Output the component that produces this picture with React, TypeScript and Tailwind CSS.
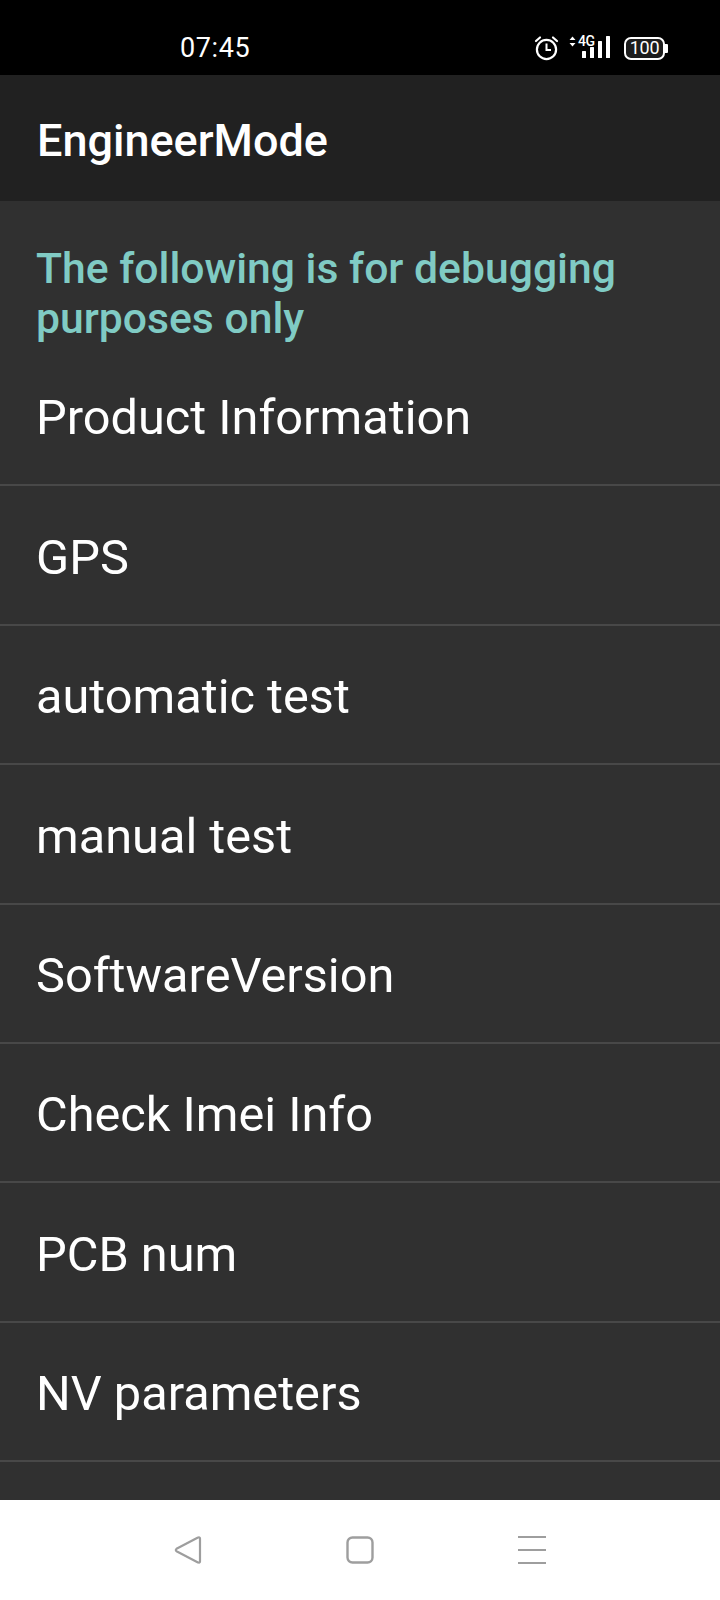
import React from 'react';

const items = [
    'Product Information',
    'GPS',
    'automatic test',
    'manual test',
    'SoftwareVersion',
    'Check Imei Info',
    'PCB num',
    'NV parameters',
];

const AlarmIcon = () => (
    <svg width="25" height="26" viewBox="0 0 25 26" fill="none" stroke="white" strokeWidth="2.2">
        <circle cx="12.5" cy="14.5" r="9.6" />
        <path d="M12.5 8.5V15H17" strokeWidth="2" />
        <path d="M2 6L6 2.5M23 6L19 2.5" strokeWidth="2.2" strokeLinecap="round" />
    </svg>
);

const SignalIcon = () => (
    <svg width="44" height="36" viewBox="0 -10 44 36" fill="white">
        <path d="M4.5 1.5L7.5 5H1.5ZM4.5 11.5L1.5 8H7.5Z" />
        <text x="10" y="11" fontSize="14" fontWeight="500" fontFamily="Roboto, sans-serif" letterSpacing="-0.5">4G</text>
        <rect x="14" y="16" width="4" height="7" rx="0.5" />
        <rect x="22" y="12" width="4" height="11" rx="0.5" />
        <rect x="30" y="6" width="4" height="17" rx="0.5" />
        <rect x="38" y="1" width="4" height="22" rx="0.5" />
    </svg>
);

const Battery = () => (
    <div className="flex items-center">
        <div className="w-[41px] h-[23px] rounded-[7px] border-2 border-white flex items-center justify-center bg-[#1c1c1c] text-white text-[18px] leading-none tracking-[-0.3px]">
            100
        </div>
        <div className="w-[3px] h-[9px] bg-white rounded-r-[1px]" />
    </div>
);

const App = () => {
    return (
        <div className="w-[720px] h-[1600px] flex flex-col overflow-hidden font-['Roboto',sans-serif] bg-[#303030]">
            {/* Status bar */}
            <div className="h-[75px] bg-black flex items-center shrink-0 text-white pt-[21px]">
                <span className="ml-[180px] text-[27px] leading-none tracking-[0.6px]">07:45</span>
                <div className="ml-auto mr-[52px] flex items-center">
                    <AlarmIcon />
                    <div className="ml-[9px] mt-[-10px]">
                        <SignalIcon />
                    </div>
                    <div className="ml-[12px]">
                        <Battery />
                    </div>
                </div>
            </div>

            {/* Action bar */}
            <div className="h-[126px] bg-[#212121] flex items-center px-[37px] shrink-0">
                <h1 className="text-white text-[45px] font-medium leading-none mt-[5px]">EngineerMode</h1>
            </div>

            <div className="flex-1 min-h-0 overflow-hidden">
                <p className="h-[146px] pl-[36px] pr-[30px] pt-[42px] text-[#80cbc4] text-[42.7px] font-medium leading-[50px]">
                    The following is for debugging purposes only
                </p>
                {items.map(item => (
                    <div key={item} className="h-[139.4px] px-[36px] flex items-center border-b-2 border-[#484848] text-white text-[48.7px] leading-none">
                        <span className="mt-[6px]">{item}</span>
                    </div>
                ))}
            </div>

            {/* Navigation bar */}
            <div className="h-[100px] bg-white shrink-0 flex items-start pt-[36px]">
                <svg className="ml-[174px]" width="28" height="28" viewBox="0 0 28 28" fill="none" stroke="#9e9e9e" strokeWidth="2.2" strokeLinejoin="round">
                    <path d="M26 2.5C26 1.5 25 1 24 1.6L2.5 12.8C1.6 13.4 1.6 14.6 2.5 15.2L24 26.4C25 27 26 26.5 26 25.5Z" />
                </svg>
                <svg className="ml-[144px]" width="28" height="28" viewBox="0 0 28 28" fill="none" stroke="#9e9e9e" strokeWidth="2.4">
                    <rect x="1.5" y="1.5" width="25" height="25" rx="5" />
                </svg>
                <svg className="ml-[144px]" width="28" height="28" viewBox="0 0 28 28" stroke="#9e9e9e" strokeWidth="2">
                    <path d="M0 1H28M0 14H28M0 27H28" />
                </svg>
            </div>
        </div>
    );
};

export default App;
